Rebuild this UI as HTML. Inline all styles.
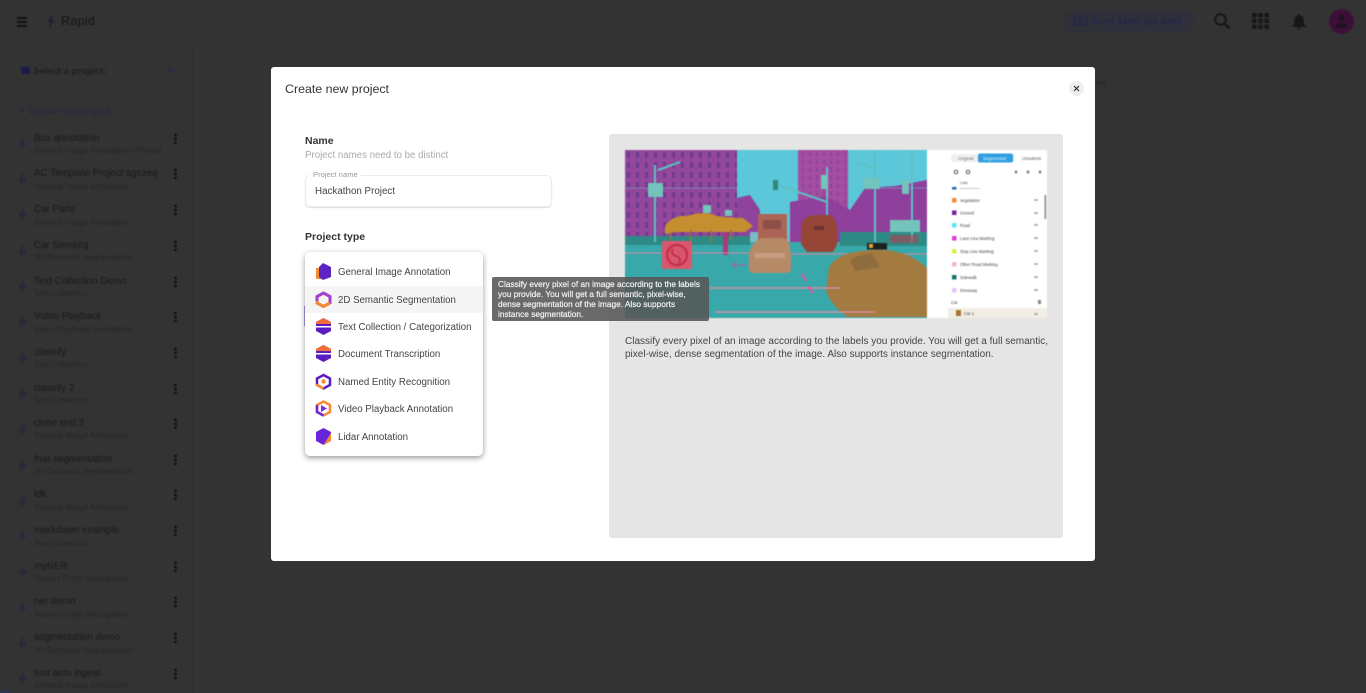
<!DOCTYPE html>
<html><head><meta charset="utf-8"><title>Create new project</title>
<style>
html,body{margin:0;padding:0;width:1366px;height:693px;overflow:hidden;background:#333;font-family:"Liberation Sans",sans-serif}
.a{position:absolute;white-space:nowrap}
#bg{position:absolute;left:0;top:0;width:1366px;height:693px;background:#333;filter:blur(.5px)}
.n{position:absolute;left:34px;font-size:9.8px;color:#191919;white-space:nowrap;margin-top:1px}
.s{position:absolute;left:34px;font-size:8.2px;color:#262626;white-space:nowrap}
.d{position:absolute;left:174px;width:3px;height:11px;background:radial-gradient(circle,#111 1.3px,transparent 1.5px) 0 0/3px 4px}
.b{position:absolute;left:18px;width:9px;height:14px}
#modal{position:absolute;left:271px;top:67px;width:824px;height:494px;background:#fff;border-radius:3px;filter:blur(.3px)}
.m{position:absolute;left:34px;width:178px;height:27.4px}
.m span{position:absolute;left:33px;top:9px;font-size:9.7px;color:#444;white-space:nowrap}
.m svg{position:absolute;left:10px;top:5px}
</style></head><body>
<div id="bg">
<div class="a" style="left:0;top:41px;width:192px;height:652px;border-right:1px solid #2e2e2e"></div>
<div class="a" style="left:17px;top:17px;width:10px;height:2px;background:#111;box-shadow:0 4px #111,0 8px #111"></div>
<svg class="a" style="left:45px;top:13px" width="12" height="17"><path d="M8 1 2 9h3l-1 7 6-9H7z" fill="#222233"/></svg>
<div class="a" style="left:61px;top:14px;font-size:12.5px;color:#141414;letter-spacing:.3px">Rapid</div>
<div class="a" style="left:21px;top:67px;width:9px;height:7px;background:#1c1c48;border-radius:1px"></div>
<div class="a" style="left:33px;top:66px;font-size:9.5px;font-weight:bold;color:#1e1e1e">Select a project:</div>
<svg class="a" style="left:164px;top:66px" width="13" height="9"><path d="M2 7 6.500 3 11 7" fill="none" stroke="#25254a" stroke-width="1.600"/></svg>
<div class="a" style="left:20px;top:106px;font-size:9.7px;color:#262640">+ Create new project</div>

<div class="n" style="top:132px">Box annotation</div><div class="s" style="top:146px">General Image Annotation | Pinned</div>
<div class="n" style="top:167px">AC Template Project agxzeq</div><div class="s" style="top:182px">General Image Annotation</div>
<div class="n" style="top:203px">Car Parts</div><div class="s" style="top:218px">General Image Annotation</div>
<div class="n" style="top:239px">Car Semseg</div><div class="s" style="top:253px">2D Semantic Segmentation</div>
<div class="n" style="top:275px">Text Collection Demo</div><div class="s" style="top:289px">Text Collection</div>
<div class="n" style="top:310px">Video Playback</div><div class="s" style="top:325px">Video Playback Annotation</div>
<div class="n" style="top:346px">classify</div><div class="s" style="top:360px">Text Collection</div>
<div class="n" style="top:382px">classify 2</div><div class="s" style="top:396px">Text Collection</div>
<div class="n" style="top:417px">clone test 2</div><div class="s" style="top:431px">General Image Annotation</div>
<div class="n" style="top:453px">fruit segmentation</div><div class="s" style="top:467px">2D Semantic Segmentation</div>
<div class="n" style="top:488px">idk</div><div class="s" style="top:503px">General Image Annotation</div>
<div class="n" style="top:524px">markdown example</div><div class="s" style="top:539px">Text Collection</div>
<div class="n" style="top:560px">myNER</div><div class="s" style="top:574px">Named Entity Recognition</div>
<div class="n" style="top:595px">ner demo</div><div class="s" style="top:610px">Named Entity Recognition</div>
<div class="n" style="top:631px">segmentation demo</div><div class="s" style="top:646px">2D Semantic Segmentation</div>
<div class="n" style="top:667px">test auto ingest</div><div class="s" style="top:681px">General Image Annotation</div>

<svg class="b" style="top:137px" viewBox="0 0 9 14"><path d="M6 0 0 8h3l-1 6 7-8H5z" fill="#28283a"/></svg><div class="d" style="top:133px"></div>
<svg class="b" style="top:172px" viewBox="0 0 9 14"><path d="M6 0 0 8h3l-1 6 7-8H5z" fill="#28283a"/></svg><div class="d" style="top:168px"></div>
<svg class="b" style="top:208px" viewBox="0 0 9 14"><path d="M6 0 0 8h3l-1 6 7-8H5z" fill="#28283a"/></svg><div class="d" style="top:204px"></div>
<svg class="b" style="top:244px" viewBox="0 0 9 14"><path d="M6 0 0 8h3l-1 6 7-8H5z" fill="#28283a"/></svg><div class="d" style="top:240px"></div>
<svg class="b" style="top:280px" viewBox="0 0 9 14"><path d="M6 0 0 8h3l-1 6 7-8H5z" fill="#28283a"/></svg><div class="d" style="top:276px"></div>
<svg class="b" style="top:315px" viewBox="0 0 9 14"><path d="M6 0 0 8h3l-1 6 7-8H5z" fill="#28283a"/></svg><div class="d" style="top:311px"></div>
<svg class="b" style="top:351px" viewBox="0 0 9 14"><path d="M6 0 0 8h3l-1 6 7-8H5z" fill="#28283a"/></svg><div class="d" style="top:347px"></div>
<svg class="b" style="top:387px" viewBox="0 0 9 14"><path d="M6 0 0 8h3l-1 6 7-8H5z" fill="#28283a"/></svg><div class="d" style="top:383px"></div>
<svg class="b" style="top:422px" viewBox="0 0 9 14"><path d="M6 0 0 8h3l-1 6 7-8H5z" fill="#28283a"/></svg><div class="d" style="top:418px"></div>
<svg class="b" style="top:458px" viewBox="0 0 9 14"><path d="M6 0 0 8h3l-1 6 7-8H5z" fill="#28283a"/></svg><div class="d" style="top:454px"></div>
<svg class="b" style="top:494px" viewBox="0 0 9 14"><path d="M6 0 0 8h3l-1 6 7-8H5z" fill="#28283a"/></svg><div class="d" style="top:489px"></div>
<svg class="b" style="top:529px" viewBox="0 0 9 14"><path d="M6 0 0 8h3l-1 6 7-8H5z" fill="#28283a"/></svg><div class="d" style="top:525px"></div>
<svg class="b" style="top:565px" viewBox="0 0 9 14"><path d="M6 0 0 8h3l-1 6 7-8H5z" fill="#28283a"/></svg><div class="d" style="top:561px"></div>
<svg class="b" style="top:601px" viewBox="0 0 9 14"><path d="M6 0 0 8h3l-1 6 7-8H5z" fill="#28283a"/></svg><div class="d" style="top:596px"></div>
<svg class="b" style="top:636px" viewBox="0 0 9 14"><path d="M6 0 0 8h3l-1 6 7-8H5z" fill="#28283a"/></svg><div class="d" style="top:632px"></div>
<svg class="b" style="top:672px" viewBox="0 0 9 14"><path d="M6 0 0 8h3l-1 6 7-8H5z" fill="#28283a"/></svg><div class="d" style="top:668px"></div>

<div class="a" style="left:1063px;top:11px;width:132px;height:21px;background:#30303a;border-radius:10px"></div>
<svg class="a" style="left:1074px;top:16px" width="13" height="10"><rect x=".7" y="1" width="11.600" height="8" fill="none" stroke="#25254a" stroke-width="1.400"/><circle cx="6.500" cy="5" r="2" fill="#25254a"/></svg>
<div class="a" style="left:1091px;top:16px;font-size:9.600px;font-weight:bold;color:#25254a">Send $100, get $200</div>
<svg class="a" style="left:1213px;top:12px" width="18" height="18"><circle cx="7.500" cy="7.500" r="5.300" fill="none" stroke="#171717" stroke-width="2"/><path d="m11.500 11.500 5 5" stroke="#171717" stroke-width="2.400"/></svg>
<svg class="a" style="left:1252px;top:13px" width="17" height="16" fill="#171717"><rect width="4.600" height="4.400" rx=".6"/><rect x="6.200" width="4.600" height="4.400" rx=".6"/><rect x="12.400" width="4.600" height="4.400" rx=".6"/><rect y="5.800" width="4.600" height="4.400" rx=".6"/><rect x="6.200" y="5.800" width="4.600" height="4.400" rx=".6"/><rect x="12.400" y="5.800" width="4.600" height="4.400" rx=".6"/><rect y="11.600" width="4.600" height="4.400" rx=".6"/><rect x="6.200" y="11.600" width="4.600" height="4.400" rx=".6"/><rect x="12.400" y="11.600" width="4.600" height="4.400" rx=".6"/></svg>
<svg class="a" style="left:1291px;top:13px" width="16" height="17" fill="#171717"><path d="M8 1c-.8 0-1.200.5-1.200 1.300C4.500 3 3.300 5 3.300 7.500v3L1 13v1h14v-1l-2.300-2.500v-3c0-2.500-1.200-4.500-3.500-5.200C9.200 1.500 8.800 1 8 1z"/><path d="M6.300 15h3.400c0 1-.8 1.700-1.700 1.700S6.300 16 6.300 15z"/></svg>
<div class="a" style="left:1329px;top:9px;width:25px;height:25px;border-radius:50%;background:#3c0f39"></div>
<svg class="a" style="left:1335px;top:14px" width="13" height="15" fill="#1d1020"><circle cx="6.500" cy="3.800" r="3"/><path d="M1 13.500c0-3 2.500-4.500 5.500-4.500s5.500 1.500 5.500 4.500z"/></svg>
<div class="a" style="left:1096px;top:78px;font-size:8px;color:#262626">ew</div>
<div class="a" style="left:0;top:691px;width:9px;height:2px;background:#223c55"></div>
</div>

<div id="modal">
<div class="a" style="left:14px;top:15px;font-size:12.400px;color:#333">Create new project</div>
<div class="a" style="left:0;top:40px;width:824px;height:1px;background:#fcfcfc"></div>
<div class="a" style="left:798px;top:14px;width:15px;height:15px;border-radius:50%;background:#efefef"></div>
<svg class="a" style="left:801px;top:17px" width="9" height="9"><path d="m2 2 5 5M7 2 2 7" stroke="#333" stroke-width="1.200"/></svg>

<div class="a" style="left:34px;top:68px;font-size:10.500px;font-weight:bold;color:#333">Name</div>
<div class="a" style="left:34px;top:83px;font-size:9.700px;color:#aaa">Project names need to be distinct</div>
<div class="a" style="left:34px;top:108px;width:245px;height:30px;border:1px solid #ececec;border-radius:5px;box-shadow:0 1px 1px #ddd"></div>
<div class="a" style="left:39px;top:103px;padding:0 3px;background:#fff;font-size:7.600px;color:#999">Project name</div>
<div class="a" style="left:44px;top:119px;font-size:9.800px;color:#444">Hackathon Project</div>
<div class="a" style="left:34px;top:164px;font-size:10.500px;font-weight:bold;color:#333">Project type</div>
<div class="a" style="left:33px;top:239px;width:2px;height:20px;background:#a49ae0"></div>

<div class="a" style="left:338px;top:67px;width:454px;height:404px;background:#e5e5e5;border-radius:3px"></div>
<svg class="a" style="left:354px;top:83px;filter:blur(.5px)" width="422" height="168" viewBox="0 0 422 168">
<defs>
<pattern id="w" width="9" height="10" patternUnits="userSpaceOnUse"><rect width="9" height="10" fill="#94489c"/><rect x="2" y="2" width="3" height="6" fill="#6f3a90"/></pattern>
<pattern id="w2" width="7" height="8" patternUnits="userSpaceOnUse"><rect width="7" height="8" fill="#a54ea1"/><rect x="2" y="1" width="2" height="5" fill="#8c4598"/></pattern>
</defs>
<rect width="302" height="168" fill="#5cc7d8"/>
<path d="M0 0H112V92H0z" fill="url(#w)"/>
<path d="M173 0H223V60H173z" fill="url(#w2)"/>
<path d="M112 48 125 45 135 60V92H112z" fill="#8f439d"/>
<path d="M165 52 200 46 225 60 240 38 270 36 302 30V92H165z" fill="#8f3f9c"/>
<path d="M0 92H302V168H0z" fill="#39a8ab"/>
<path d="M0 86H125V95H0zM215 82H302V96H215z" fill="#2e8a85"/>
<path d="M125 82H165V92H125z" fill="#79bcc8"/>
<g stroke="#5fc0c4" fill="none">
<path d="M30 15V92M202 17V66M250 2V92M287 2V92M150 34 202 52M33 20 55 12M232 12 250 18" stroke-width="2"/>
<path d="M0 38H112M223 38H302" stroke-width="1" opacity=".55"/>
</g>
<g fill="#73c4bb"><rect x="23" y="33" width="15" height="14"/><rect x="238" y="28" width="17" height="11"/><rect x="196" y="25" width="7" height="14"/><rect x="78" y="55" width="8" height="8"/><rect x="100" y="60" width="7" height="6"/><rect x="277" y="30" width="7" height="14"/><rect x="265" y="70" width="30" height="12"/></g>
<rect x="148" y="30" width="5" height="10" fill="#2f8a7d"/>
<path d="M40 76Q48 65 62 66 80 60 92 66q15 2 26 2l10 8-8 6H52L40 84z" fill="#c58e2e"/>
<path d="M46 82v12M66 80v13M86 80v12M106 80v10" stroke="#8e7a3a" stroke-width="1.500"/>
<path d="M98 82h5v23h-5z" fill="#a83a78"/>
<rect x="265" y="85" width="28" height="8" fill="#b3404e" opacity=".6"/>
<path d="M0 103H125M150 104H302" stroke="#d48aa0" stroke-width="1"/>
<path d="M133 64h29v28h-29z" fill="#ad6456"/><rect x="138" y="70" width="18" height="9" fill="#8c5047"/>
<path d="M176 80q0-14 14-15h14q7 1 8 14v16l-4 7h-26l-6-8z" fill="#964637"/>
<rect x="189" y="76" width="10" height="4" fill="#6d3030"/>
<path d="M131 92q2-4 8-4h17q6 0 8 5l2 13v13q0 4-5 4h-33q-4 0-4-5v-12q1-10 7-14z" fill="#b68a67"/>
<rect x="130" y="103" width="30" height="5" fill="#c89c80"/>
<path d="M204 118q5-12 26-16 16-3 32-2 24 3 40 18v49h-80q-18-14-21-27z" fill="#a37a3f"/>
<path d="M225 110q10-6 22-6l8 13-25 4z" fill="#8f6c3d"/>
<rect x="242" y="93" width="20" height="6.500" fill="#1f1f1f"/><rect x="244" y="94" width="4" height="4" fill="#e2a32e"/>
<rect x="37" y="91" width="30" height="28" fill="#d9576d"/><circle cx="52" cy="105" r="10" fill="none" stroke="#c42c4a" stroke-width="2.200"/><path d="M48 99q-3 5 3 7t3 7" stroke="#c42c4a" stroke-width="1.800" fill="none"/>
<path d="M85 138H215M90 162H250" stroke="#d88ea3" stroke-width="1.500"/>
<path d="m177 124 4 7M183 136l5 7" stroke="#e355a8" stroke-width="2"/>
<path d="M107 115h15M107 115l5-3M107 115l5 3" stroke="#a75ca8" stroke-width="1" fill="none"/>

<rect x="302" width="120" height="168" fill="#fff"/>
<rect x="326" y="4" width="91" height="8" rx="2" fill="#f0f0f0"/><rect x="353" y="3.500" width="35" height="9" rx="2" fill="#2f9fe1"/><rect x="390" y="3" width="30" height="10" fill="#fff"/>
<g font-size="4.500" font-family="Liberation Sans"><text x="333" y="10" fill="#777">Original</text><text x="358" y="10" fill="#e8f5ff">Segmented</text><text x="397" y="10" fill="#555">Unsubmit</text><text x="335" y="34" fill="#555" font-size="3.800">Lists</text></g>
<circle cx="331" cy="22" r="1.800" fill="none" stroke="#555"/><circle cx="343" cy="22" r="1.800" fill="none" stroke="#555"/><circle cx="391" cy="22" r="1.500" fill="#888"/><circle cx="403" cy="22" r="1.500" fill="#888"/><circle cx="415" cy="22" r="1.500" fill="#888"/>
<rect x="419.500" y="45" width="1.600" height="24" fill="#888"/>
<rect x="327" y="37" width="4.500" height="2.500" fill="#2568b5"/><rect x="335" y="38" width="20" height="1" fill="#ccc"/>
<rect x="327" y="48" width="4.500" height="4.500" fill="#f08c3c"/><rect x="327" y="60.500" width="4.500" height="4.500" fill="#7d1aa0"/><rect x="327" y="73" width="4.500" height="4.500" fill="#59e7ee"/><rect x="327" y="86" width="4.500" height="4.500" fill="#e43ad9"/><rect x="327" y="99" width="4.500" height="4.500" fill="#d8ee50"/><rect x="327" y="112" width="4.500" height="4.500" fill="#f5b8c0"/><rect x="327" y="125" width="4.500" height="4.500" fill="#17766f"/><rect x="327" y="138" width="4.500" height="4.500" fill="#e2c5f5"/>
<g font-size="4.200" fill="#444" font-family="Liberation Sans"><text x="335" y="52">Vegetation</text><text x="335" y="64.500">Ground</text><text x="335" y="77">Road</text><text x="335" y="90">Lane Line Marking</text><text x="335" y="103">Stop Line Marking</text><text x="335" y="116">Other Road Marking</text><text x="335" y="129">Sidewalk</text><text x="335" y="142">Driveway</text><text x="326" y="154">Car</text></g>
<g fill="#aaa"><ellipse cx="411" cy="50" rx="2" ry="1"/><ellipse cx="411" cy="63" rx="2" ry="1"/><ellipse cx="411" cy="75" rx="2" ry="1"/><ellipse cx="411" cy="88" rx="2" ry="1"/><ellipse cx="411" cy="101" rx="2" ry="1"/><ellipse cx="411" cy="114" rx="2" ry="1"/><ellipse cx="411" cy="127" rx="2" ry="1"/><ellipse cx="411" cy="140" rx="2" ry="1"/><rect x="413" y="150" width="3" height="4" fill="#888"/></g>
<rect x="323" y="158" width="99" height="10" fill="#f2ede5"/><rect x="331" y="160" width="5" height="6" fill="#a7742d"/><ellipse cx="411" cy="164" rx="2" ry="1" fill="#aaa"/>
<text x="339" y="165" font-size="4.200" fill="#444" font-family="Liberation Sans">Car 1</text>
</svg>
<div class="a" style="left:354px;top:268px;font-size:10px;line-height:13px;color:#444">Classify every pixel of an image according to the labels you provide. You will get a full semantic,<br>pixel-wise, dense segmentation of the image. Also supports instance segmentation.</div>

<div class="a" style="left:34px;top:185px;width:178px;height:204px;background:#fff;border-radius:5px;box-shadow:0 2px 6px rgba(0,0,0,.4)">
<div class="m" style="left:0;top:6px"><svg width="17" height="17" viewBox="0 0 17 17"><path d="M1 5h6v11H1z" fill="#f58a32"/><path d="M8 0l8 4v10l-8 3-4-3V4z" fill="#5b23c4"/></svg><span>General Image Annotation</span></div>
<div class="m" style="left:0;top:34px;background:#f5f5f5"><svg width="17" height="17" viewBox="0 0 17 17"><path d="M8.500 2 15 5.500v6.500L8.500 15.500 2 12V5.500z" fill="none" stroke="#a23fd0" stroke-width="3"/><path d="M2 10v2l6.500 3.500L15 12" fill="none" stroke="#f58a32" stroke-width="3"/></svg><span>2D Semantic Segmentation</span></div>
<div class="m" style="left:0;top:61px"><svg width="17" height="17" viewBox="0 0 17 17"><path d="M8.500 0 16 4v9l-7.500 4L1 13V4z" fill="#5a1cc0"/><path d="M1 4 8.500 0 16 4v2H1z" fill="#f36d3c"/><path d="M1 8h15v1.500H1z" fill="#fff"/></svg><span>Text Collection / Categorization</span></div>
<div class="m" style="left:0;top:88px"><svg width="17" height="17" viewBox="0 0 17 17"><path d="M8.500 0 16 4v9l-7.500 4L1 13V4z" fill="#5a1cc0"/><path d="M1 4 8.500 0 16 4v2H1z" fill="#f36d3c"/><path d="M1 8h15v1.500H1z" fill="#fff"/></svg><span>Document Transcription</span></div>
<div class="m" style="left:0;top:116px"><svg width="17" height="17" viewBox="0 0 17 17"><path d="M8.500 2 15 5.500v6.500L8.500 15.500 2 12V5.500z" fill="none" stroke="#5a1cc0" stroke-width="2.500"/><path d="M2 11v1l6.500 3.500" fill="none" stroke="#f58a32" stroke-width="2.500"/><circle cx="8.500" cy="8.500" r="2.200" fill="#f58a32"/></svg><span>Named Entity Recognition</span></div>
<div class="m" style="left:0;top:143px"><svg width="17" height="17" viewBox="0 0 17 17"><path d="M8.500 1.500 15 5v7l-6.500 3.500L2 12V5z" fill="none" stroke="#f58a32" stroke-width="2.500"/><path d="M2 5v7l6.500 3.500" fill="none" stroke="#6b27d8" stroke-width="2.500"/><path d="m6 5 6 3.500L6 12z" fill="#7b2fe0"/></svg><span>Video Playback Annotation</span></div>
<div class="m" style="left:0;top:171px"><svg width="17" height="17" viewBox="0 0 17 17"><path d="M8.500 0 16 4v9l-7.500 4L1 13V4z" fill="#6a25d8"/><path d="M16 5v8l-7.500 4z" fill="#f58a32"/></svg><span>Lidar Annotation</span></div>
</div>

<div class="a" style="left:221px;top:210px;width:217px;height:44px;background:rgba(85,85,85,.88);border-radius:2px"></div>
<div class="a" style="left:227px;top:212px;font-size:8.300px;line-height:10px;color:#f1f1f1;-webkit-text-stroke:.2px #f1f1f1">Classify every pixel of an image according to the labels<br>you provide. You will get a full semantic, pixel-wise,<br>dense segmentation of the image. Also supports<br>instance segmentation.</div>
</div>
</body></html>
